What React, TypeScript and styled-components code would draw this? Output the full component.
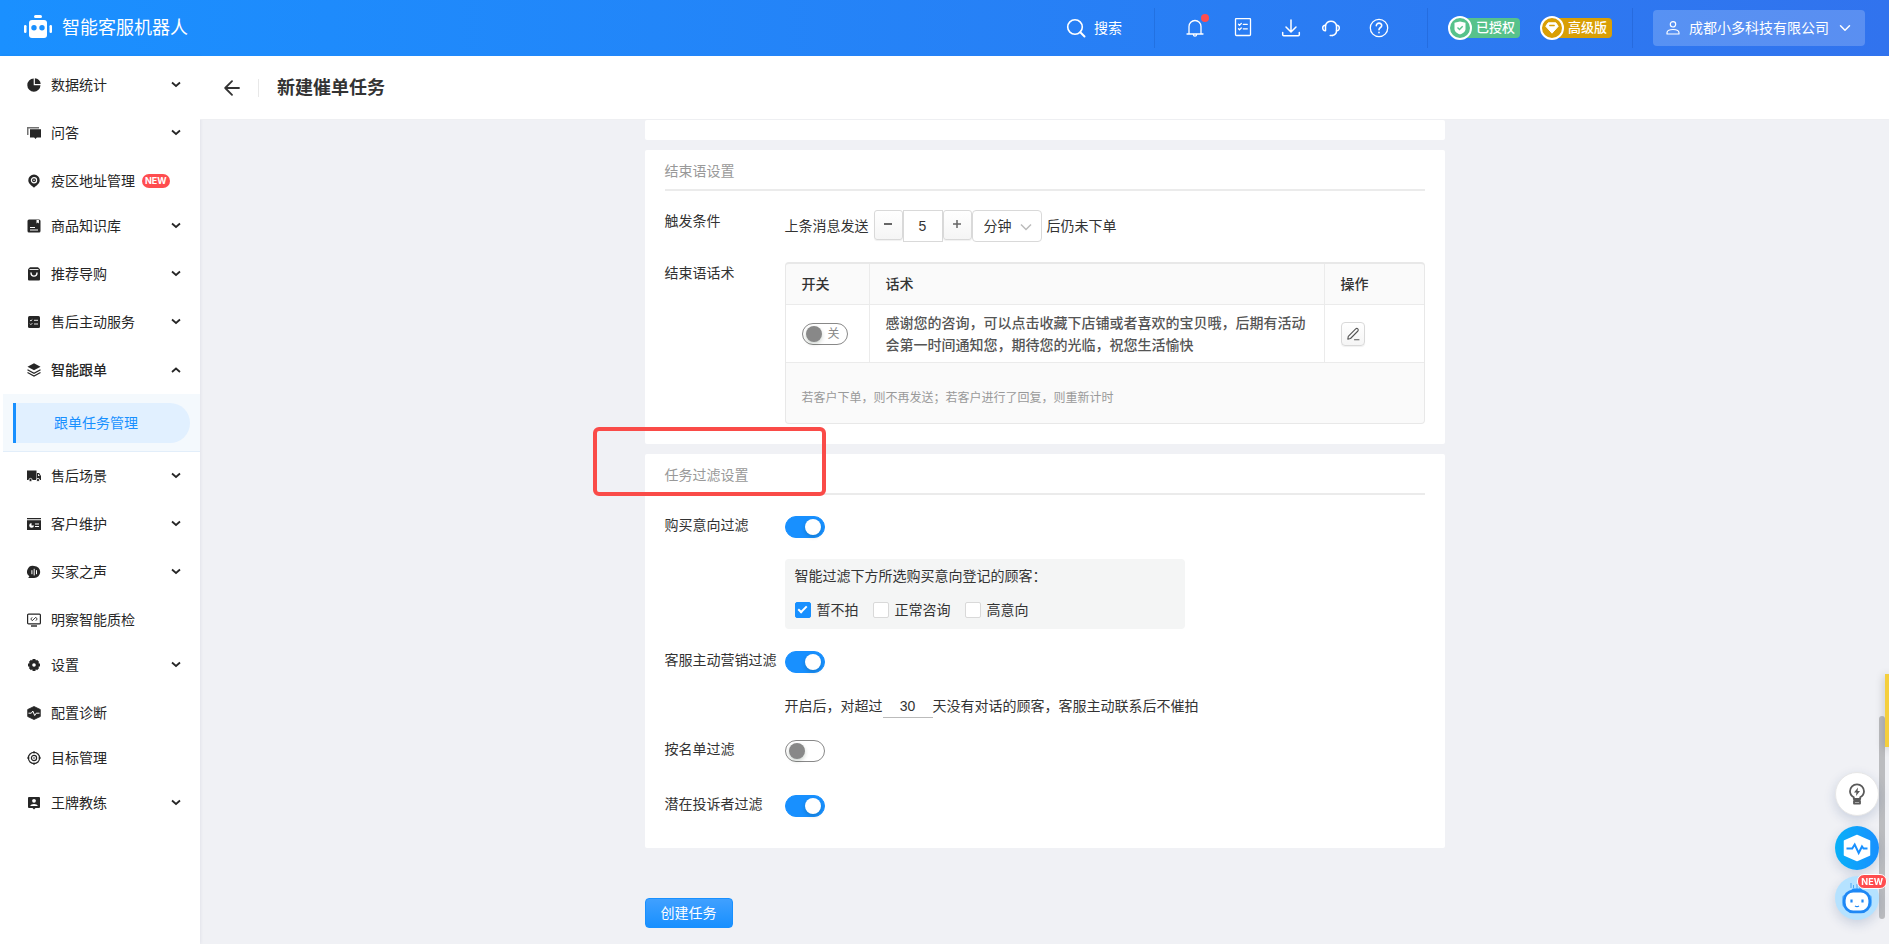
import React, { useState } from "react";
import type { ReactNode } from "react";
import styled, { createGlobalStyle, css } from "styled-components";

const GlobalStyle = createGlobalStyle`
  *, *::before, *::after { box-sizing: border-box; }
  body {
    margin: 0;
    background: #f0f1f5;
    color: #333;
    font: 14px/22px "Liberation Sans", "Noto Sans CJK SC", sans-serif;
  }
  button, input, select { font: inherit; color: inherit; margin: 0; }
  button { cursor: pointer; }
`;

/* ---------- page frame ---------- */

const Page = styled.div`
  display: flex;
  flex-direction: column;
  min-height: 100vh;
`;

const Body = styled.div`
  display: flex;
  flex: 1;
`;

const Main = styled.main`
  display: flex;
  flex-direction: column;
  flex: 1;
  min-width: 0;
`;

/* ---------- top bar ---------- */

const TopBar = styled.header`
  display: flex;
  align-items: center;
  height: 56px;
  padding: 0 24px;
  color: #fff;
  background: linear-gradient(90deg, #1a90ff, #3173ee);
`;

const Brand = styled.a`
  display: flex;
  align-items: center;
  gap: 10px;
  margin-right: auto;
  color: #fff;
  font-size: 18px;
  line-height: 26px;
  text-decoration: none;
`;

const BarGroup = styled.div<{ $gap?: number; $pad: string }>`
  display: flex;
  align-items: center;
  gap: ${(p) => p.$gap ?? 0}px;
  padding: ${(p) => p.$pad};
`;

const BarDivider = styled.span`
  width: 1px;
  height: 40px;
  background: rgba(0, 40, 120, 0.15);
`;

const BarButton = styled.button`
  display: flex;
  align-items: center;
  gap: 8px;
  padding: 0;
  border: 0;
  background: none;
  color: #fff;
  position: relative;
`;

const UnreadDot = styled.span`
  position: absolute;
  top: -4px;
  right: -4px;
  width: 8px;
  height: 8px;
  border-radius: 50%;
  background: #ff4d4f;
`;

const Badge = styled.span`
  display: flex;
  align-items: center;
  width: 72px;
`;

const BadgeDisc = styled.span<{ $color: string }>`
  z-index: 1;
  display: flex;
  flex: none;
  align-items: center;
  justify-content: center;
  width: 24px;
  height: 24px;
  border: 2px solid #fff;
  border-radius: 50%;
  background: ${(p) => p.$color};
`;

const BadgeTag = styled.span<{ $color: string }>`
  flex: 1;
  height: 20px;
  margin-left: -12px;
  padding-left: 16px;
  border-radius: 4px;
  background: ${(p) => p.$color};
  font-size: 13px;
  font-weight: 500;
  line-height: 20px;
  white-space: nowrap;
`;

const AccountButton = styled.button`
  display: flex;
  align-items: center;
  gap: 9px;
  height: 36px;
  margin-left: 20px;
  padding: 0 13px;
  border: 0;
  border-radius: 4px;
  color: #fff;
  background: rgba(255, 255, 255, 0.2);
`;

/* ---------- side menu ---------- */

const Sidebar = styled.nav`
  flex: none;
  width: 200px;
  padding-top: 5px;
  background: #fff;
  box-shadow: 1px 0 3px rgba(0, 0, 60, 0.06);
`;

const MenuList = styled.ul`
  margin: 0;
  padding: 0;
  list-style: none;
`;

const MenuRow = styled.button<{ $leaf?: boolean; $active?: boolean }>`
  display: flex;
  align-items: center;
  width: 100%;
  height: ${(p) => (p.$leaf ? 45 : 48)}px;
  padding: ${(p) => (p.$leaf ? "3px 17px 0 27px" : "0 17px 0 27px")};
  border: 0;
  background: none;
  color: #262626;
  font-weight: ${(p) => (p.$active ? 500 : 400)};
  text-align: left;
`;

const MenuText = styled.span`
  margin-left: 10px;
  white-space: nowrap;
`;

const Chevron = styled.svg`
  margin-left: auto;
`;

const NewTag = styled.span`
  height: 14px;
  margin-left: 7px;
  padding: 0 3px;
  border-radius: 7px;
  background: #ff4d4f;
  color: #fff;
  font: 700 9px/14px Inter, "Liberation Sans", sans-serif;
`;

const SubMenu = styled.div`
  margin-left: 3px;
  padding: 9px 10px 8px;
  border-bottom: 1px solid #e2eefa;
  background: #f4f9fd;
`;

const SubLink = styled.a`
  display: block;
  padding: 9px 0 9px 38px;
  border-left: 3px solid #1890ff;
  border-radius: 0 20px 20px 0;
  background: #e1f0ff;
  color: #1890ff;
  text-decoration: none;
`;

/* ---------- title bar ---------- */

const TitleBar = styled.div`
  display: flex;
  align-items: center;
  height: 64px;
  padding: 0 24px;
  border-bottom: 1px solid #eeeff2;
  background: #fff;
`;

const BackButton = styled.button`
  display: flex;
  padding: 0 18px 0 0;
  border: 0;
  background: none;
`;

const TitleText = styled.h1`
  margin: 0;
  padding-left: 18px;
  font-size: 18px;
  font-weight: 700;
  line-height: 18px;
  border-left: 1px solid #e8e8e8;
`;

/* ---------- cards and form ---------- */

const Column = styled.div`
  display: flex;
  flex-direction: column;
  gap: 10px;
  width: 100%;
  max-width: 800px;
  margin: 0 auto;
  padding-bottom: 16px;
`;

const Card = styled.section`
  position: relative;
  padding: 0 20px;
  border-radius: 2px;
  background: #fff;
`;

const CardTail = styled(Card)`
  height: 20px;
`;

const CardTitle = styled.h2`
  margin: 0 0 19px;
  padding: 10px 0 7px;
  border-bottom: 2px solid #ebebeb;
  color: #999;
  font-size: 14px;
  font-weight: 400;
`;

const Field = styled.div`
  display: flex;
  padding-bottom: 20px;
`;

const FieldLabel = styled.label`
  flex: none;
  width: 120px;
  white-space: nowrap;
`;

const FieldBody = styled.div`
  flex: 1;
  min-width: 0;
`;

const InlineRow = styled.div`
  display: flex;
  align-items: center;
  gap: 5px;
`;

const NumberGroup = styled.div`
  display: flex;
  align-items: flex-start;
`;

const raised = css`
  border: 1px solid #d9d9d9;
  background: linear-gradient(#fff, #f5f5f5);
  box-shadow: 0 1px 1px rgba(0, 0, 0, 0.06);
`;

const StepButton = styled.button`
  display: flex;
  align-items: center;
  justify-content: center;
  width: 29px;
  height: 30px;
  padding: 0 0 2px;
  border-radius: 3px;
  color: #666;
  ${raised}
`;

const NumberInput = styled.input`
  width: 40px;
  height: 32px;
  padding: 0;
  border: 1px solid #d9d9d9;
  background: #fff;
  text-align: center;
`;

const SelectBox = styled.span`
  position: relative;
  display: flex;
  svg { position: absolute; right: 10px; top: 11px; pointer-events: none; }
`;

const UnitSelect = styled.select`
  appearance: none;
  width: 70px;
  height: 32px;
  padding: 0 11px;
  border: 1px solid #d9d9d9;
  border-radius: 4px;
  background: #fff;
`;

/* ---------- script table ---------- */

const TableFrame = styled.div`
  border: 1px solid #e8e8e8;
  border-top-width: 2px;
  border-radius: 4px;
  background: #fafafa;
  overflow: hidden;
`;

const ScriptTable = styled.table`
  width: 100%;
  border-collapse: separate;
  border-spacing: 0;
  table-layout: fixed;
`;

const cell = css`
  padding: 0 16px;
  border-bottom: 1px solid #ebebeb;
  text-align: left;
  &:not(:last-child) { border-right: 1px solid #ebebeb; }
`;

const HeadCell = styled.th<{ $width?: number }>`
  ${cell}
  width: ${(p) => (p.$width ? `${p.$width}px` : "auto")};
  height: 41px;
  font-weight: 500;
`;

const BodyCell = styled.td`
  ${cell}
  height: 58px;
  background: #fff;
  color: #555;
  font-weight: 500;
`;

const TableNote = styled.p`
  margin: 0;
  padding: 26px 16px 16px;
  color: #999;
  font-size: 12px;
  line-height: 18px;
`;

const EditButton = styled.button`
  display: flex;
  align-items: center;
  justify-content: center;
  width: 24px;
  height: 24px;
  padding: 0;
  border-radius: 4px;
  ${raised}
`;

/* ---------- switches and tick boxes ---------- */

const SwitchBox = styled.span`
  position: relative;
  display: flex;
  width: 46px;
`;

const SwitchText = styled.span`
  position: absolute;
  top: 0;
  right: 8px;
  color: #888;
  font-size: 12px;
  font-weight: 400;
  pointer-events: none;
`;

const SwitchInput = styled.input<{ $wide?: boolean }>`
  appearance: none;
  display: flex;
  align-items: center;
  width: ${(p) => (p.$wide ? 46 : 40)}px;
  height: 22px;
  padding: 0 3px;
  border: 1px solid #888;
  border-radius: 11px;
  background: #fff;
  cursor: pointer;
  &::before {
    content: "";
    width: 16px;
    height: 16px;
    border-radius: 50%;
    background: #888;
    box-shadow: 0 2px 4px rgba(0, 35, 11, 0.2);
  }
  &:checked {
    justify-content: flex-end;
    border-color: #1890ff;
    background: #1890ff;
  }
  &:checked::before { background: #fff; }
`;

const SwitchLine = styled.div`
  height: 35px;
  padding-top: 2px;
`;

const IntentPanel = styled.div`
  width: 400px;
  height: 70px;
  margin-top: 10px;
  padding: 6px 10px;
  border-radius: 4px;
  background: #f4f5f5;
`;

const TickRow = styled.div`
  display: flex;
  gap: 14px;
  padding-top: 12px;
`;

const TickLabel = styled.label`
  display: flex;
  align-items: center;
  gap: 6px;
`;

const TickInput = styled.input`
  appearance: none;
  display: flex;
  align-items: center;
  justify-content: center;
  width: 16px;
  height: 16px;
  border: 1px solid #d9d9d9;
  border-radius: 2px;
  background: #fff;
  &:checked { border-color: #1890ff; background: #1890ff; }
  &:checked::before {
    content: "";
    width: 5px;
    height: 9px;
    margin-bottom: 3px;
    border: solid #fff;
    border-width: 0 2px 2px 0;
    transform: rotate(45deg);
  }
`;

const DaysLine = styled.div`
  display: flex;
  align-items: center;
  margin-top: 10px;
`;

const DaysInput = styled.input`
  width: 50px;
  height: 24px;
  padding: 0;
  border: 0;
  border-bottom: 1px solid #bbb;
  background: none;
  text-align: center;
`;

const HighlightFrame = styled.div`
  position: absolute;
  top: -27px;
  left: -52px;
  width: 233px;
  height: 69px;
  border: 4px solid #fa4b48;
  border-radius: 6px;
  pointer-events: none;
`;

const PrimaryButton = styled.button`
  align-self: flex-start;
  height: 30px;
  margin-top: 40px;
  padding: 0 15px;
  border: 1px solid #1890ff;
  border-radius: 4px;
  background: linear-gradient(#40a0ff, #1890ff);
  color: #fff;
  line-height: 26px;
`;

/* ---------- floating helpers ---------- */

const FloatStack = styled.aside`
  position: fixed;
  right: 10px;
  bottom: 24px;
  display: flex;
  flex-direction: column;
  gap: 6px;
`;

const FloatButton = styled.button<{ $bg: string; $line?: string }>`
  position: relative;
  display: flex;
  align-items: center;
  justify-content: center;
  width: 44px;
  height: 44px;
  padding: 0;
  border: 1px solid ${(p) => p.$line ?? "transparent"};
  border-radius: 50%;
  background: ${(p) => p.$bg};
  background-origin: border-box;
  box-shadow: 0 4px 12px rgba(30, 60, 120, 0.18);
  &:first-child { margin-bottom: 4px; }
`;

const FloatTag = styled(NewTag)`
  position: absolute;
  top: -3px;
  right: -9px;
  height: 15px;
  margin: 0;
  border: 1px solid #fff;
  line-height: 13px;
`;

const ScrollThumb = styled.div`
  position: fixed;
  right: 4px;
  bottom: 25px;
  width: 6px;
  height: 203px;
  border-radius: 3px;
  background: rgba(0, 0, 0, 0.22);
`;

const EdgeTab = styled.div`
  position: fixed;
  right: 0;
  bottom: 197px;
  width: 4px;
  height: 73px;
  background: #f5cf3d;
  box-shadow: 0 2px 10px rgba(0, 0, 0, 0.3);
`;

/* ---------- drawings ---------- */

const MENU_ICONS: Record<string, ReactNode> = {
  stats: (
    <>
      <path d="M6.700.500v6.800h6.800A6.600 6.600 0 1 1 6.700.500z" />
      <path d="M7.900.300a6.200 6.200 0 0 1 5.800 5.800H7.900z" />
    </>
  ),
  chat: (
    <>
      <path d="M0 1h12v1.500H1.500V9H0z" opacity=".65" />
      <path d="M3 3.200h11v8.300H9.800L8.500 13l-1.300-1.500H3z" />
    </>
  ),
  pin: (
    <>
      <path d="M7 .5a5.700 5.700 0 0 1 5.700 5.700c0 3.300-3 5-5.700 7.500-2.700-2.500-5.700-4.200-5.700-7.500A5.700 5.700 0 0 1 7 .5z" />
      <circle cx="7" cy="6.200" r="2.600" fill="none" stroke="#fff" strokeWidth="1.200" />
      <circle cx="7" cy="6.200" r=".8" fill="#fff" />
    </>
  ),
  book: (
    <>
      <rect x=".5" y=".5" width="13" height="13" rx="1.500" />
      <path d="M9.500 1v3.500l1.200-.9 1.200.9V1z" fill="#fff" />
      <path d="M3 8.500h5M3 11h8" stroke="#fff" />
    </>
  ),
  bag: (
    <>
      <path d="M3 .3h8l2 2v10.200a1 1 0 0 1-1 1H2a1 1 0 0 1-1-1V2.300z" />
      <path d="M2.500 2.500h9" stroke="#fff" strokeWidth=".9" />
      <path d="M4 5.500c0 4.800 6 4.800 6 0" fill="none" stroke="#fff" strokeWidth="1.400" />
    </>
  ),
  tasks: (
    <>
      <rect x="1" y="1" width="12" height="12" rx="1.500" />
      <path d="M3 5l.9.900 1.400-1.400M3 8.700l.9.900 1.400-1.400M7 5.300h4M7 9h4" fill="none" stroke="#fff" strokeWidth=".9" />
    </>
  ),
  layers: (
    <>
      <path d="M7 .3l6.500 3.500L7 7.300.5 3.800z" />
      <path d="M.5 6.700L7 10.200l6.500-3.500M.5 9.500L7 13l6.500-3.500" fill="none" stroke="#262626" strokeWidth="1.200" />
    </>
  ),
  truck: (
    <>
      <path d="M0 1.500h9.500v9.500H0zM10 4h2.200L14 7v4h-4z" />
      <circle cx="3.500" cy="11" r="1.600" stroke="#fff" strokeWidth=".8" />
      <circle cx="11" cy="11" r="1.600" stroke="#fff" strokeWidth=".8" />
      <path d="M11 5.300h.8l.9 1.700H11z" fill="#fff" />
    </>
  ),
  card: (
    <>
      <path d="M0 1h14v1.200H0zM0 3.200h14V13H0z" />
      <path d="M4.500 6v2.500H7A2.400 2.400 0 1 1 4.500 6z" fill="#fff" />
      <path d="M8 7h4M8 9.500h4" stroke="#fff" strokeWidth="1.100" />
    </>
  ),
  voice: (
    <>
      <path d="M7.200 1a5.800 5.800 0 1 1 0 12H1.200l1.200-1.700A5.800 5.800 0 0 1 7.200 1z" />
      <path d="M4.900 5.200v4M7.200 3.800v6.600M9.500 5.200v4" stroke="#fff" strokeWidth="1" />
    </>
  ),
  monitor: (
    <>
      <rect x=".6" y="1.100" width="12.800" height="9.800" rx="1" fill="none" stroke="#262626" strokeWidth="1.200" />
      <path d="M4 13h6" stroke="#262626" strokeWidth="1.400" />
      <path d="M5.200 4.300L3.800 6l1.400 1.700L8.800 4.300 10.200 6 8.800 7.700" fill="none" stroke="#262626" strokeWidth=".9" />
    </>
  ),
  gear: (
    <>
      <circle cx="7" cy="7" r="5" />
      <path d="M7 1v12M1 7h12M2.900 2.900l8.200 8.200M11.100 2.900l-8.200 8.200" stroke="#262626" strokeWidth="3" />
      <circle cx="7" cy="7" r="1.800" fill="#fff" />
    </>
  ),
  pulse: (
    <>
      <path d="M7 .5l6.300 3v7L7 13.500l-6.300-3v-7z" stroke="#262626" strokeWidth=".8" strokeLinejoin="round" />
      <path d="M1.500 7.200h2.800L5.800 5l1.900 4.500L9.200 7.200h3.300" fill="none" stroke="#fff" strokeWidth="1" />
    </>
  ),
  target: (
    <>
      <circle cx="7" cy="7" r="5.600" fill="none" stroke="#262626" strokeWidth="1.200" />
      <circle cx="7" cy="7" r="2.600" fill="none" stroke="#262626" strokeWidth="1.200" />
      <path d="M7 0v2.500M7 11.500V14M0 7h2.500M11.500 7H14" stroke="#262626" strokeWidth="1" />
      <circle cx="7" cy="7" r=".8" />
    </>
  ),
  coach: (
    <>
      <path d="M1 2a1 1 0 0 1 1-1h10a1 1 0 0 1 1 1v9a1 1 0 0 1-1 1H8.500L7 13.500 5.500 12H2a1 1 0 0 1-1-1z" />
      <circle cx="7" cy="4.800" r="1.900" fill="#fff" />
      <path d="M3.200 10c.5-2.800 7.100-2.800 7.600 0z" fill="#fff" />
    </>
  ),
};

function MenuIcon({ name }: { name: string }) {
  return (
    <svg width="14" height="14" viewBox="0 0 14 14" fill="#262626" aria-hidden="true">
      {MENU_ICONS[name]}
    </svg>
  );
}

function LineIcon({ size = 20, width = 1.3, children }: { size?: number; width?: number; children: ReactNode }) {
  return (
    <svg
      width={size}
      height={size}
      viewBox={`0 0 ${size} ${size}`}
      fill="none"
      stroke="currentColor"
      strokeWidth={width}
      strokeLinecap="round"
      strokeLinejoin="round"
      aria-hidden="true"
    >
      {children}
    </svg>
  );
}

function LogoMark() {
  return (
    <svg width="28" height="26" viewBox="0 0 28 26" fill="#fff" aria-hidden="true">
      <rect x="10" y="0" width="8" height="3" rx="1.500" />
      <rect x="5" y="5" width="18" height="18" rx="3" />
      <rect x="0" y="10" width="2.500" height="8" rx="1.200" />
      <rect x="25.500" y="10" width="2.500" height="8" rx="1.200" />
      <circle cx="10" cy="12.800" r="2.700" fill="#1a90ff" />
      <circle cx="18" cy="12.800" r="2.700" fill="#1a90ff" />
    </svg>
  );
}

/* ---------- data ---------- */

interface MenuEntry {
  icon: string;
  text: string;
  leaf?: boolean;
  isNew?: boolean;
  child?: string;
}

const MENU: MenuEntry[] = [
  { icon: "stats", text: "数据统计" },
  { icon: "chat", text: "问答" },
  { icon: "pin", text: "疫区地址管理", leaf: true, isNew: true },
  { icon: "book", text: "商品知识库" },
  { icon: "bag", text: "推荐导购" },
  { icon: "tasks", text: "售后主动服务" },
  { icon: "layers", text: "智能跟单", child: "跟单任务管理" },
  { icon: "truck", text: "售后场景" },
  { icon: "card", text: "客户维护" },
  { icon: "voice", text: "买家之声" },
  { icon: "monitor", text: "明察智能质检", leaf: true },
  { icon: "gear", text: "设置" },
  { icon: "pulse", text: "配置诊断", leaf: true },
  { icon: "target", text: "目标管理", leaf: true },
  { icon: "coach", text: "王牌教练" },
];

/* ---------- sections ---------- */

function Header() {
  return (
    <TopBar>
      <Brand href="#home">
        <LogoMark />
        智能客服机器人
      </Brand>
      <BarGroup $pad="0 32px 0 0">
        <BarButton type="button">
          <LineIcon width={1.6}>
            <circle cx="9" cy="9" r="7.300" />
            <path d="M14.300 14.300l4.200 4.200" strokeWidth="2" />
          </LineIcon>
          搜索
        </BarButton>
      </BarGroup>
      <BarDivider />
      <BarGroup $gap={28} $pad="0 20px 0 30px">
        <BarButton type="button" aria-label="通知">
          <LineIcon>
            <path d="M4 16V8.500a6 6 0 0 1 12 0V16M2 16h16M8.300 16.500c.3 2.200 3.100 2.200 3.400 0" />
          </LineIcon>
          <UnreadDot />
        </BarButton>
        <BarButton type="button" aria-label="任务">
          <LineIcon>
            <rect x="2.500" y=".5" width="15" height="17" rx="1" />
            <path d="M5.500 6.300l1 .9L8.300 5.500M5.500 10.800l1 .9 1.800-1.700M10.300 6.300h4M10.300 10.800h4" />
          </LineIcon>
        </BarButton>
        <BarButton type="button" aria-label="下载">
          <LineIcon width={1.500}>
            <path d="M10 2v11.500M5 9l5 5 5-5M1.700 14.500v2.300a1 1 0 0 0 1 1h14.600a1 1 0 0 0 1-1v-2.300" />
          </LineIcon>
        </BarButton>
      </BarGroup>
      <BarGroup $gap={28} $pad="0 38px 0 0">
        <BarButton type="button" aria-label="客服">
          <LineIcon width={1.500}>
            <path d="M4.500 7.500a5.700 5.700 0 0 1 11 0v5.300c0 2.800-1.700 4.200-4 4.600" />
            <path d="M4.500 7.200C.8 7 .8 13 4.500 12.800zM15.500 7.200c3.700-.2 3.700 5.800 0 5.600M9.200 17.400h2.300" />
          </LineIcon>
        </BarButton>
        <BarButton type="button" aria-label="帮助">
          <LineIcon>
            <circle cx="10" cy="10" r="8.700" />
            <path d="M7.300 7.800c0-3.600 5.600-3.400 5.400-.1-.1 1.900-2.700 1.800-2.700 4.100M10 14.300v.4" strokeWidth="1.600" />
          </LineIcon>
        </BarButton>
      </BarGroup>
      <BarDivider />
      <BarGroup $gap={20} $pad="0 20px">
        <Badge>
          <BadgeDisc $color="#57c28b">
            <svg width="12" height="14" viewBox="0 0 12 14" aria-hidden="true">
              <path d="M6 0.500l5.500 1.300v6C11.500 11 8.500 12.600 6 13.500 3.500 12.600.5 11 .5 7.800v-6z" fill="#fff" />
              <path d="M3.500 6.500l2 2 3.200-3.300" fill="none" stroke="#57c28b" strokeWidth="1.400" />
            </svg>
          </BadgeDisc>
          <BadgeTag $color="#57c28b">已授权</BadgeTag>
        </Badge>
        <Badge>
          <BadgeDisc $color="#d99f05">
            <svg width="14" height="12" viewBox="0 0 14 12" aria-hidden="true">
              <path d="M3.200.8h7.600l2.400 3.500L7 11.200.8 4.300z" fill="#fff" strokeLinejoin="round" stroke="#fff" />
              <path d="M4.800 3.500h4.400" stroke="#d99f05" strokeWidth="1.400" strokeLinecap="round" />
            </svg>
          </BadgeDisc>
          <BadgeTag $color="#d99f05">高级版</BadgeTag>
        </Badge>
      </BarGroup>
      <BarDivider />
      <AccountButton type="button">
        <LineIcon size={14} width={1.200}>
          <circle cx="7" cy="3.300" r="2.700" />
          <path d="M1 13v-1.300c0-4.300 12-4.300 12 0V13z" />
        </LineIcon>
        成都小多科技有限公司
        <LineIcon size={14} width={1.500}>
          <path d="M2.500 4.800L7 9.300l4.500-4.500" />
        </LineIcon>
      </AccountButton>
    </TopBar>
  );
}

function SideMenu() {
  return (
    <Sidebar>
      <MenuList>
        {MENU.map((m) => (
          <li key={m.text}>
            <MenuRow type="button" $leaf={m.leaf} $active={!!m.child}>
              <MenuIcon name={m.icon} />
              <MenuText>{m.text}</MenuText>
              {m.isNew && <NewTag>NEW</NewTag>}
              {!m.leaf && (
                <Chevron width="14" height="14" viewBox="0 0 14 14" fill="none" stroke="#262626" strokeWidth="1.800">
                  <path d={m.child ? "M3 9l4-3.500L11 9" : "M3 4.500L7 8l4-3.500"} />
                </Chevron>
              )}
            </MenuRow>
            {m.child && (
              <SubMenu>
                <SubLink href="#tasks">{m.child}</SubLink>
              </SubMenu>
            )}
          </li>
        ))}
      </MenuList>
    </Sidebar>
  );
}

function ClosingCard() {
  const [minutes, setMinutes] = useState(5);
  return (
    <Card>
      <CardTitle>结束语设置</CardTitle>
      <Field>
        <FieldLabel htmlFor="minutes">触发条件</FieldLabel>
        <FieldBody>
          <InlineRow>
            <span>上条消息发送</span>
            <NumberGroup>
              <StepButton type="button" aria-label="减少" onClick={() => setMinutes(minutes - 1)}>
                <svg width="10" height="10" stroke="currentColor" strokeWidth="2">
                  <path d="M1 5h8" />
                </svg>
              </StepButton>
              <NumberInput
                id="minutes"
                inputMode="numeric"
                value={minutes}
                onChange={(e) => setMinutes(Number(e.target.value) || 0)}
              />
              <StepButton type="button" aria-label="增加" onClick={() => setMinutes(minutes + 1)}>
                <svg width="10" height="10" stroke="currentColor" strokeWidth="1.500">
                  <path d="M1 5h8M5 1v8" />
                </svg>
              </StepButton>
              <SelectBox>
                <UnitSelect aria-label="时间单位" defaultValue="分钟">
                  <option>分钟</option>
                  <option>小时</option>
                </UnitSelect>
                <svg width="12" height="12" fill="none" stroke="#bbb" strokeWidth="1.500" aria-hidden="true">
                  <path d="M1 3.500l5 5 5-5" />
                </svg>
              </SelectBox>
            </NumberGroup>
            <span>后仍未下单</span>
          </InlineRow>
        </FieldBody>
      </Field>
      <Field>
        <FieldLabel as="span">结束语话术</FieldLabel>
        <FieldBody>
          <TableFrame>
            <ScriptTable>
              <thead>
                <tr>
                  <HeadCell $width={84}>开关</HeadCell>
                  <HeadCell>话术</HeadCell>
                  <HeadCell $width={99}>操作</HeadCell>
                </tr>
              </thead>
              <tbody>
                <tr>
                  <BodyCell>
                    <SwitchBox>
                      <SwitchInput type="checkbox" role="switch" $wide aria-label="开关" />
                      <SwitchText>关</SwitchText>
                    </SwitchBox>
                  </BodyCell>
                  <BodyCell>
                    感谢您的咨询，可以点击收藏下店铺或者喜欢的宝贝哦，后期有活动会第一时间通知您，期待您的光临，祝您生活愉快
                  </BodyCell>
                  <BodyCell>
                    <EditButton type="button" aria-label="编辑">
                      <LineIcon size={14} width={1.100}>
                        <path d="M1.800 12.200l.5-2.900 7.400-7.500c1.400-1.300 3.500.6 2.200 2.200l-7.400 7.500zM8.500 12.800h4.500" />
                      </LineIcon>
                    </EditButton>
                  </BodyCell>
                </tr>
              </tbody>
            </ScriptTable>
            <TableNote>若客户下单，则不再发送；若客户进行了回复，则重新计时</TableNote>
          </TableFrame>
        </FieldBody>
      </Field>
    </Card>
  );
}

interface SwitchFieldProps {
  id: string;
  label: string;
  on?: boolean;
  children?: ReactNode;
}

function SwitchField({ id, label, on, children }: SwitchFieldProps) {
  return (
    <Field>
      <FieldLabel htmlFor={id}>{label}</FieldLabel>
      <FieldBody>
        <SwitchLine>
          <SwitchInput id={id} type="checkbox" role="switch" defaultChecked={on} />
        </SwitchLine>
        {children}
      </FieldBody>
    </Field>
  );
}

function FilterCard() {
  return (
    <Card>
      <CardTitle>任务过滤设置</CardTitle>
      <SwitchField id="intent" label="购买意向过滤" on>
        <IntentPanel>
          <div>智能过滤下方所选购买意向登记的顾客：</div>
          <TickRow>
            {["暂不拍", "正常咨询", "高意向"].map((t, i) => (
              <TickLabel key={t}>
                <TickInput type="checkbox" defaultChecked={i === 0} />
                {t}
              </TickLabel>
            ))}
          </TickRow>
        </IntentPanel>
      </SwitchField>
      <SwitchField id="marketing" label="客服主动营销过滤" on>
        <DaysLine>
          开启后，对超过
          <DaysInput aria-label="天数" inputMode="numeric" defaultValue="30" />
          天没有对话的顾客，客服主动联系后不催拍
        </DaysLine>
      </SwitchField>
      <SwitchField id="list" label="按名单过滤" />
      <SwitchField id="complaint" label="潜在投诉者过滤" on />
      <HighlightFrame />
    </Card>
  );
}

function Helpers() {
  return (
    <>
      <EdgeTab />
      <ScrollThumb />
      <FloatStack>
        <FloatButton type="button" aria-label="建议" $bg="#fff" $line="#e6e6e6">
          <svg width="18" height="22" viewBox="0 0 18 22" fill="none" stroke="#595959" strokeWidth="1.800" strokeLinejoin="round">
            <path d="M5.800 16v-1.800C3.500 13 2 11 2 8.300a7 7 0 0 1 14 0c0 2.700-1.500 4.700-3.800 5.900V16zM6 18h6v2.500H6z" />
            <path d="M10 4.500L6 9.500h2.400L8 13l4-5H9.600z" fill="#595959" stroke="none" />
          </svg>
        </FloatButton>
        <FloatButton type="button" aria-label="诊断" $bg="linear-gradient(90deg, #08b0f8, #1890ff)">
          <svg width="28" height="28" viewBox="0 0 28 28">
            <path d="M14 1.500l12.500 5.500v14L14 26.500 1.500 21V7z" fill="#fff" stroke="#fff" strokeWidth="1.500" strokeLinejoin="round" />
            <path d="M3.500 14.500h5.700l2.500-4 4 8.500 3.300-6.500 1.500 2h4" fill="none" stroke="#1890ff" strokeWidth="2" />
          </svg>
        </FloatButton>
        <FloatButton type="button" aria-label="助手" $bg="#b5e2ff">
          <svg width="32" height="32" viewBox="0 0 32 32">
            <path d="M10 1v5M12.500 3v3M16 2v6M19 4v3" stroke="#4aa8f5" strokeWidth="1" />
            <path d="M9 9l3-2.500h8L23 9z" fill="#1890ff" />
            <rect x="1" y="13" width="30" height="12" rx="3" fill="#6bbcff" />
            <rect x="3.200" y="9.200" width="25.600" height="20.600" rx="9" fill="#fff" stroke="#1e88f5" strokeWidth="2.800" />
            <path d="M10.500 17.500v3M21.500 17.500v3" stroke="#1e88f5" strokeWidth="2.200" />
            <path d="M14 24q2 1.300 4 0" fill="none" stroke="#1e88f5" strokeWidth="1.300" />
          </svg>
          <FloatTag>NEW</FloatTag>
        </FloatButton>
      </FloatStack>
    </>
  );
}

export default function App() {
  return (
    <Page>
      <GlobalStyle />
      <Header />
      <Body>
        <SideMenu />
        <Main>
          <TitleBar>
            <BackButton type="button" aria-label="返回">
              <LineIcon size={16} width={1.800}>
                <path d="M15 8H1.500M8 1.200L1.200 8 8 14.800" />
              </LineIcon>
            </BackButton>
            <TitleText>新建催单任务</TitleText>
          </TitleBar>
          <Column>
            <CardTail />
            <ClosingCard />
            <FilterCard />
            <PrimaryButton type="button">创建任务</PrimaryButton>
          </Column>
        </Main>
      </Body>
      <Helpers />
    </Page>
  );
}
